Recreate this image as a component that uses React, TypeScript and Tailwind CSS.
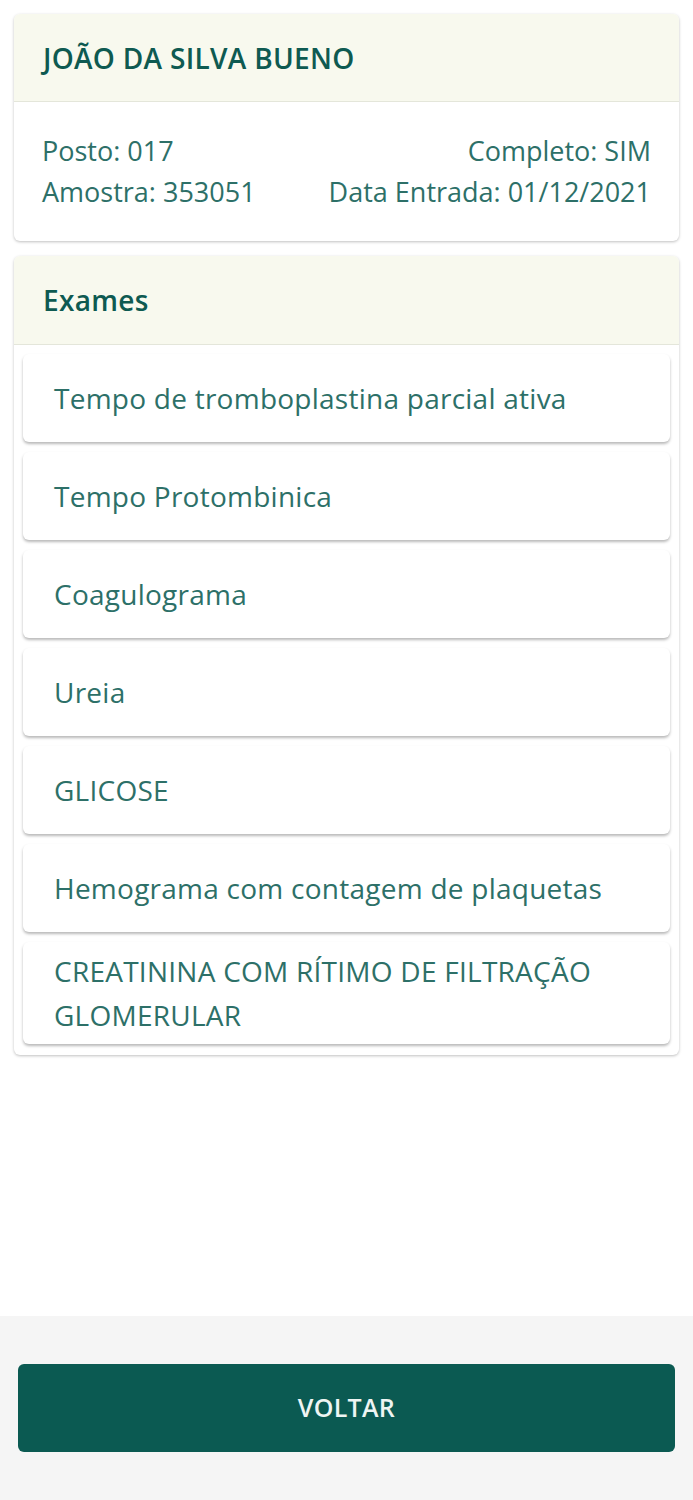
const exames = [
  'Tempo de tromboplastina parcial ativa',
  'Tempo Protombinica',
  'Coagulograma',
  'Ureia',
  'GLICOSE',
  'Hemograma com contagem de plaquetas',
  'CREATININA COM RÍTIMO DE FILTRAÇÃO GLOMERULAR',
]

export default function App() {
  return (
    <div className="flex flex-col w-[693px] h-[1500px] bg-white font-['Open_Sans',sans-serif] text-[#2d7068]">
      <main className="flex-1 flex flex-col gap-[15px] px-[14px] pt-[14px]">
        {/* Paciente */}
        <section className="bg-white rounded-md shadow-[0_1px_3px_rgba(0,0,0,0.25)] overflow-hidden">
          <div className="h-[88px] flex items-center px-[29px] bg-[#f8f9ee] border-b border-[#e4e6da]">
            <h1 className="text-[28px] font-semibold text-[#0e5a51] tracking-[0.3px]">JOÃO DA SILVA BUENO</h1>
          </div>
          <div className="px-[28px] pt-[28px] pb-[29px] text-[27px] leading-[41px]">
            <div className="flex justify-between">
              <span>Posto: 017</span>
              <span>Completo: SIM</span>
            </div>
            <div className="flex justify-between">
              <span>Amostra: 353051</span>
              <span>Data Entrada: 01/12/2021</span>
            </div>
          </div>
        </section>

        {/* Exames */}
        <section className="bg-white rounded-md shadow-[0_1px_3px_rgba(0,0,0,0.25)] overflow-hidden">
          <div className="h-[89px] flex items-center px-[29px] bg-[#f8f9ee] border-b border-[#e4e6da]">
            <h2 className="text-[28px] font-semibold text-[#0e5a51] tracking-[0.3px]">Exames</h2>
          </div>
          <ul className="flex flex-col gap-[10px] px-[9px] pt-[9px] pb-[11px]">
            {exames.map((exame) => (
              <li
                key={exame}
                className="min-h-[88px] flex items-center px-[31px] py-[7px] bg-white rounded-md shadow-[0_2px_3px_rgba(0,0,0,0.28)] text-[28px] leading-[44px] tracking-[0.25px]"
              >
                {exame}
              </li>
            ))}
          </ul>
        </section>
      </main>

      <footer className="h-[184px] bg-[#f5f5f5] px-[18px] pt-[48px]">
        <button className="w-full h-[88px] rounded-md bg-[#0b5a52] text-[#eef5f3] text-[25px] font-semibold tracking-[0.3px]">
          VOLTAR
        </button>
      </footer>
    </div>
  )
}
